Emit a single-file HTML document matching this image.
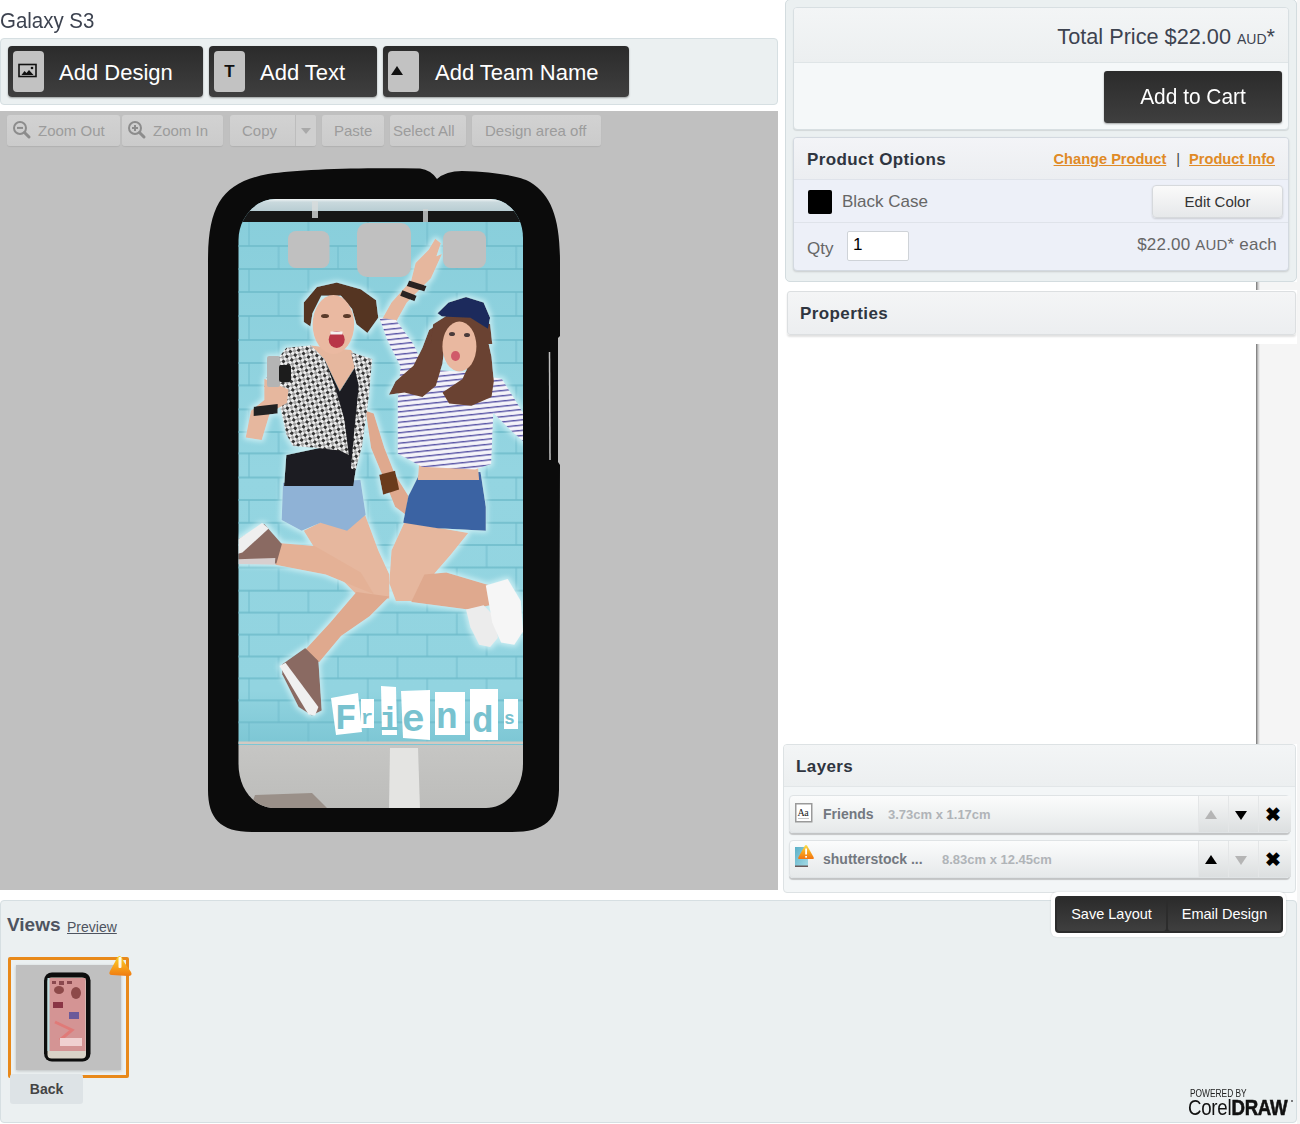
<!DOCTYPE html>
<html><head><meta charset="utf-8">
<style>
*{box-sizing:border-box;margin:0;padding:0}
html,body{width:1300px;height:1124px;overflow:hidden;background:#fff;font-family:"Liberation Sans",sans-serif;color:#333}
.a{position:absolute}
.title{left:0;top:6px;font-size:22px;color:#3d4350;line-height:30px;white-space:nowrap;transform:scaleX(.93);transform-origin:0 0}
.tbar{left:0;top:38px;width:778px;height:67px;background:#ebf0f1;border:1px solid #d6dfe2;border-radius:4px}
.dbtn{background:linear-gradient(#2b2b2b,#3f3f3f);border-radius:4px;box-shadow:0 1px 2px rgba(0,0,0,.35)}
.dbtn .ic{position:absolute;left:5px;top:5px;width:31px;height:41px;background:#c2c2c2;border-radius:4px}
.dbtn .tx{position:absolute;top:1px;line-height:51px;color:#fff;font-size:22px;white-space:nowrap}
.canvas{left:0;top:111px;width:778px;height:779px;background:#c0c0c0}
.gbtn{height:31px;top:115px;background:linear-gradient(#d2d2d2,#cbcbcb);border-radius:3px;box-shadow:0 1px 1px rgba(0,0,0,.08);color:#9c9c9c;font-size:15px;line-height:31px;white-space:nowrap}
.rp{left:785px;top:-1px;width:512px;height:283px;background:#ebf0f1;border:1px solid #d3dcdf;border-radius:5px}
.box{background:#f4f6f7;border:1px solid #d5dcdf;border-radius:4px;box-shadow:0 1px 2px rgba(0,0,0,.12)}
.lrow{left:789px;width:501px;height:38px;background:linear-gradient(#fbfcfc,#e6e9ea);border:1px solid #dfe3e5;border-radius:4px;box-shadow:0 2px 1px rgba(0,0,0,.2)}
.lname{top:0;line-height:36px;font-size:14px;font-weight:bold;color:#737880;white-space:nowrap}
.ldim{top:1px;line-height:36px;font-size:13px;font-weight:bold;color:#b0b4b8;white-space:nowrap}
.lb{top:0;width:30px;height:36px;background:linear-gradient(#f6f7f7,#dcdfe0);border-left:1px solid #e4e6e7}
.lb.x{width:33px;font-size:19px;text-align:center;line-height:38px;color:#000;font-weight:bold;text-indent:-5px}
.tri{position:absolute;left:6px;top:14px;width:0;height:0;border-left:6px solid transparent;border-right:6px solid transparent}
.tri.up{border-bottom:9px solid #000}
.tri.dn{border-top:9px solid #000;top:15px}
</style></head><body>
<div class="a title">Galaxy S3</div>
<div class="a tbar"></div>
<div class="a dbtn" style="left:8px;top:46px;width:195px;height:51px"><div class="ic"><svg class="a" style="left:5px;top:12px" width="20" height="16" viewBox="0 0 20 16"><rect x="1" y="1.5" width="17" height="12" fill="none" stroke="#111" stroke-width="1.6"/><path d="M3.5,12 L6.5,8 L8.5,10 L11,7 L15.5,12 Z" fill="#111"/><circle cx="14" cy="5" r="1.3" fill="#111"/></svg></div><div class="tx" style="left:51px">Add Design</div></div>
<div class="a dbtn" style="left:209px;top:46px;width:168px;height:51px"><div class="ic"><div class="a" style="left:0;top:0;width:31px;line-height:41px;text-align:center;font-weight:bold;font-size:17px;color:#111">T</div></div><div class="tx" style="left:51px">Add Text</div></div>
<div class="a dbtn" style="left:383px;top:46px;width:246px;height:51px"><div class="ic"><div class="a" style="left:3px;top:15px;width:0;height:0;border-left:6px solid transparent;border-right:6px solid transparent;border-bottom:9px solid #111"></div></div><div class="tx" style="left:52px">Add Team Name</div></div>

<div class="a canvas"></div>
<svg class="a" style="left:0;top:111px" width="778" height="779" viewBox="0 111 778 779">
<defs>
 <clipPath id="scr"><path d="M276,199 L490,199 C508,199 523,216 523,238 L523,764 C523,789 506,808 486,808 L275,808 C254,808 238.5,789 238.5,764 L238.5,240 C238.5,218 255,199 276,199 Z"/></clipPath>
 <pattern id="stripe" x="0" y="0" width="8" height="5.2" patternUnits="userSpaceOnUse" patternTransform="rotate(-6)">
  <rect width="8" height="5.4" fill="#f4f3f9"/><rect y="3.4" width="8" height="1.4" fill="#5a56a6"/>
 </pattern>
 <pattern id="vest" x="0" y="0" width="6" height="6" patternUnits="userSpaceOnUse" patternTransform="rotate(35)">
  <rect width="6" height="6" fill="#ececec"/><rect width="3" height="3" fill="#363636"/><rect x="3" y="3" width="3" height="3" fill="#a0a0a0"/>
 </pattern>
 <filter id="glow" x="-10%" y="-10%" width="120%" height="120%">
  <feMorphology in="SourceAlpha" operator="dilate" radius="1.5" result="d"/>
  <feGaussianBlur in="d" stdDeviation="2.5" result="b"/>
  <feFlood flood-color="#d8f4f8" flood-opacity=".75"/>
  <feComposite in2="b" operator="in" result="g"/>
  <feMerge><feMergeNode in="g"/><feMergeNode in="SourceGraphic"/></feMerge>
 </filter>
 <linearGradient id="wallg" x1="0" y1="0" x2="0" y2="1">
  <stop offset="0" stop-color="#88cedb"/><stop offset=".5" stop-color="#94d5e1"/><stop offset=".9" stop-color="#92d4e0"/><stop offset="1" stop-color="#7cc6d4"/>
 </linearGradient>
 <linearGradient id="floorg" x1="0" y1="0" x2="0" y2="1">
  <stop offset="0" stop-color="#c6c6c4"/><stop offset="1" stop-color="#bcbcba"/>
 </linearGradient>
 <linearGradient id="topg" x1="0" y1="0" x2="0" y2="1">
  <stop offset="0" stop-color="#f0f4f5"/><stop offset=".25" stop-color="#c9d9dd"/><stop offset="1" stop-color="#b7ccd2"/>
 </linearGradient>
</defs>
<path d="M208,262 C208,205 222,183 268,174 C300,169 360,167.5 420,168.5 Q431,170 437,179 Q446,171 462,171 C495,172 520,176 530,182 C552,195 560,220 560,262 L560,336 L558,338 L558,462 L560,465 L559,790 C558,820 545,832 512,832 L252,832 C220,832 208,818 208,790 Z" fill="#0b0b0b"/>
<path d="M549.5,352 L550,460" stroke="#e0e0e0" stroke-width="1.5" opacity=".85"/>
<g clip-path="url(#scr)">
<rect x="238" y="199" width="286" height="546" fill="url(#wallg)"/>
<rect x="238" y="245.0" width="286" height="2" fill="#6fbccb" opacity=".8"/>
<rect x="238" y="268.0" width="286" height="2" fill="#6fbccb" opacity=".8"/>
<rect x="238" y="291.0" width="286" height="2" fill="#6fbccb" opacity=".8"/>
<rect x="238" y="315.0" width="286" height="2" fill="#6fbccb" opacity=".8"/>
<rect x="238" y="339.0" width="286" height="2" fill="#6fbccb" opacity=".8"/>
<rect x="238" y="362.0" width="286" height="2" fill="#6fbccb" opacity=".8"/>
<rect x="238" y="384.4" width="286" height="2" fill="#6fbccb" opacity=".8"/>
<rect x="238" y="408.4" width="286" height="2" fill="#6fbccb" opacity=".8"/>
<rect x="238" y="431.0" width="286" height="2" fill="#6fbccb" opacity=".8"/>
<rect x="238" y="452.4" width="286" height="2" fill="#6fbccb" opacity=".8"/>
<rect x="238" y="476.5" width="286" height="2" fill="#6fbccb" opacity=".8"/>
<rect x="238" y="499.0" width="286" height="2" fill="#6fbccb" opacity=".8"/>
<rect x="238" y="521.8" width="286" height="2" fill="#6fbccb" opacity=".8"/>
<rect x="238" y="544.0" width="286" height="2" fill="#6fbccb" opacity=".8"/>
<rect x="238" y="566.5" width="286" height="2" fill="#6fbccb" opacity=".8"/>
<rect x="238" y="589.7" width="286" height="2" fill="#6fbccb" opacity=".8"/>
<rect x="238" y="611.6" width="286" height="2" fill="#6fbccb" opacity=".8"/>
<rect x="238" y="633.6" width="286" height="2" fill="#6fbccb" opacity=".8"/>
<rect x="238" y="655.5" width="286" height="2" fill="#6fbccb" opacity=".8"/>
<rect x="238" y="677.4" width="286" height="2" fill="#6fbccb" opacity=".8"/>
<rect x="238" y="699.4" width="286" height="2" fill="#6fbccb" opacity=".8"/>
<rect x="238" y="721.3" width="286" height="2" fill="#6fbccb" opacity=".8"/>
<rect x="248.0" y="222.0" width="2" height="24.0" fill="#6fbccb" opacity=".5"/>
<rect x="307.4" y="222.0" width="2" height="24.0" fill="#6fbccb" opacity=".5"/>
<rect x="366.8" y="222.0" width="2" height="24.0" fill="#6fbccb" opacity=".5"/>
<rect x="426.2" y="222.0" width="2" height="24.0" fill="#6fbccb" opacity=".5"/>
<rect x="485.6" y="222.0" width="2" height="24.0" fill="#6fbccb" opacity=".5"/>
<rect x="277.6" y="246.0" width="2" height="23.0" fill="#6fbccb" opacity=".5"/>
<rect x="337.0" y="246.0" width="2" height="23.0" fill="#6fbccb" opacity=".5"/>
<rect x="396.4" y="246.0" width="2" height="23.0" fill="#6fbccb" opacity=".5"/>
<rect x="455.8" y="246.0" width="2" height="23.0" fill="#6fbccb" opacity=".5"/>
<rect x="515.2" y="246.0" width="2" height="23.0" fill="#6fbccb" opacity=".5"/>
<rect x="248.0" y="269.0" width="2" height="23.0" fill="#6fbccb" opacity=".5"/>
<rect x="307.4" y="269.0" width="2" height="23.0" fill="#6fbccb" opacity=".5"/>
<rect x="366.8" y="269.0" width="2" height="23.0" fill="#6fbccb" opacity=".5"/>
<rect x="426.2" y="269.0" width="2" height="23.0" fill="#6fbccb" opacity=".5"/>
<rect x="485.6" y="269.0" width="2" height="23.0" fill="#6fbccb" opacity=".5"/>
<rect x="277.6" y="292.0" width="2" height="24.0" fill="#6fbccb" opacity=".5"/>
<rect x="337.0" y="292.0" width="2" height="24.0" fill="#6fbccb" opacity=".5"/>
<rect x="396.4" y="292.0" width="2" height="24.0" fill="#6fbccb" opacity=".5"/>
<rect x="455.8" y="292.0" width="2" height="24.0" fill="#6fbccb" opacity=".5"/>
<rect x="515.2" y="292.0" width="2" height="24.0" fill="#6fbccb" opacity=".5"/>
<rect x="248.0" y="316.0" width="2" height="24.0" fill="#6fbccb" opacity=".5"/>
<rect x="307.4" y="316.0" width="2" height="24.0" fill="#6fbccb" opacity=".5"/>
<rect x="366.8" y="316.0" width="2" height="24.0" fill="#6fbccb" opacity=".5"/>
<rect x="426.2" y="316.0" width="2" height="24.0" fill="#6fbccb" opacity=".5"/>
<rect x="485.6" y="316.0" width="2" height="24.0" fill="#6fbccb" opacity=".5"/>
<rect x="277.6" y="340.0" width="2" height="23.0" fill="#6fbccb" opacity=".5"/>
<rect x="337.0" y="340.0" width="2" height="23.0" fill="#6fbccb" opacity=".5"/>
<rect x="396.4" y="340.0" width="2" height="23.0" fill="#6fbccb" opacity=".5"/>
<rect x="455.8" y="340.0" width="2" height="23.0" fill="#6fbccb" opacity=".5"/>
<rect x="515.2" y="340.0" width="2" height="23.0" fill="#6fbccb" opacity=".5"/>
<rect x="248.0" y="363.0" width="2" height="22.4" fill="#6fbccb" opacity=".5"/>
<rect x="307.4" y="363.0" width="2" height="22.4" fill="#6fbccb" opacity=".5"/>
<rect x="366.8" y="363.0" width="2" height="22.4" fill="#6fbccb" opacity=".5"/>
<rect x="426.2" y="363.0" width="2" height="22.4" fill="#6fbccb" opacity=".5"/>
<rect x="485.6" y="363.0" width="2" height="22.4" fill="#6fbccb" opacity=".5"/>
<rect x="277.6" y="385.4" width="2" height="24.0" fill="#6fbccb" opacity=".5"/>
<rect x="337.0" y="385.4" width="2" height="24.0" fill="#6fbccb" opacity=".5"/>
<rect x="396.4" y="385.4" width="2" height="24.0" fill="#6fbccb" opacity=".5"/>
<rect x="455.8" y="385.4" width="2" height="24.0" fill="#6fbccb" opacity=".5"/>
<rect x="515.2" y="385.4" width="2" height="24.0" fill="#6fbccb" opacity=".5"/>
<rect x="248.0" y="409.4" width="2" height="22.6" fill="#6fbccb" opacity=".5"/>
<rect x="307.4" y="409.4" width="2" height="22.6" fill="#6fbccb" opacity=".5"/>
<rect x="366.8" y="409.4" width="2" height="22.6" fill="#6fbccb" opacity=".5"/>
<rect x="426.2" y="409.4" width="2" height="22.6" fill="#6fbccb" opacity=".5"/>
<rect x="485.6" y="409.4" width="2" height="22.6" fill="#6fbccb" opacity=".5"/>
<rect x="277.6" y="432.0" width="2" height="21.4" fill="#6fbccb" opacity=".5"/>
<rect x="337.0" y="432.0" width="2" height="21.4" fill="#6fbccb" opacity=".5"/>
<rect x="396.4" y="432.0" width="2" height="21.4" fill="#6fbccb" opacity=".5"/>
<rect x="455.8" y="432.0" width="2" height="21.4" fill="#6fbccb" opacity=".5"/>
<rect x="515.2" y="432.0" width="2" height="21.4" fill="#6fbccb" opacity=".5"/>
<rect x="248.0" y="453.4" width="2" height="24.1" fill="#6fbccb" opacity=".5"/>
<rect x="307.4" y="453.4" width="2" height="24.1" fill="#6fbccb" opacity=".5"/>
<rect x="366.8" y="453.4" width="2" height="24.1" fill="#6fbccb" opacity=".5"/>
<rect x="426.2" y="453.4" width="2" height="24.1" fill="#6fbccb" opacity=".5"/>
<rect x="485.6" y="453.4" width="2" height="24.1" fill="#6fbccb" opacity=".5"/>
<rect x="277.6" y="477.5" width="2" height="22.5" fill="#6fbccb" opacity=".5"/>
<rect x="337.0" y="477.5" width="2" height="22.5" fill="#6fbccb" opacity=".5"/>
<rect x="396.4" y="477.5" width="2" height="22.5" fill="#6fbccb" opacity=".5"/>
<rect x="455.8" y="477.5" width="2" height="22.5" fill="#6fbccb" opacity=".5"/>
<rect x="515.2" y="477.5" width="2" height="22.5" fill="#6fbccb" opacity=".5"/>
<rect x="248.0" y="500.0" width="2" height="22.8" fill="#6fbccb" opacity=".5"/>
<rect x="307.4" y="500.0" width="2" height="22.8" fill="#6fbccb" opacity=".5"/>
<rect x="366.8" y="500.0" width="2" height="22.8" fill="#6fbccb" opacity=".5"/>
<rect x="426.2" y="500.0" width="2" height="22.8" fill="#6fbccb" opacity=".5"/>
<rect x="485.6" y="500.0" width="2" height="22.8" fill="#6fbccb" opacity=".5"/>
<rect x="277.6" y="522.8" width="2" height="22.2" fill="#6fbccb" opacity=".5"/>
<rect x="337.0" y="522.8" width="2" height="22.2" fill="#6fbccb" opacity=".5"/>
<rect x="396.4" y="522.8" width="2" height="22.2" fill="#6fbccb" opacity=".5"/>
<rect x="455.8" y="522.8" width="2" height="22.2" fill="#6fbccb" opacity=".5"/>
<rect x="515.2" y="522.8" width="2" height="22.2" fill="#6fbccb" opacity=".5"/>
<rect x="248.0" y="545.0" width="2" height="22.5" fill="#6fbccb" opacity=".5"/>
<rect x="307.4" y="545.0" width="2" height="22.5" fill="#6fbccb" opacity=".5"/>
<rect x="366.8" y="545.0" width="2" height="22.5" fill="#6fbccb" opacity=".5"/>
<rect x="426.2" y="545.0" width="2" height="22.5" fill="#6fbccb" opacity=".5"/>
<rect x="485.6" y="545.0" width="2" height="22.5" fill="#6fbccb" opacity=".5"/>
<rect x="277.6" y="567.5" width="2" height="23.2" fill="#6fbccb" opacity=".5"/>
<rect x="337.0" y="567.5" width="2" height="23.2" fill="#6fbccb" opacity=".5"/>
<rect x="396.4" y="567.5" width="2" height="23.2" fill="#6fbccb" opacity=".5"/>
<rect x="455.8" y="567.5" width="2" height="23.2" fill="#6fbccb" opacity=".5"/>
<rect x="515.2" y="567.5" width="2" height="23.2" fill="#6fbccb" opacity=".5"/>
<rect x="248.0" y="590.7" width="2" height="21.9" fill="#6fbccb" opacity=".5"/>
<rect x="307.4" y="590.7" width="2" height="21.9" fill="#6fbccb" opacity=".5"/>
<rect x="366.8" y="590.7" width="2" height="21.9" fill="#6fbccb" opacity=".5"/>
<rect x="426.2" y="590.7" width="2" height="21.9" fill="#6fbccb" opacity=".5"/>
<rect x="485.6" y="590.7" width="2" height="21.9" fill="#6fbccb" opacity=".5"/>
<rect x="277.6" y="612.6" width="2" height="22.0" fill="#6fbccb" opacity=".5"/>
<rect x="337.0" y="612.6" width="2" height="22.0" fill="#6fbccb" opacity=".5"/>
<rect x="396.4" y="612.6" width="2" height="22.0" fill="#6fbccb" opacity=".5"/>
<rect x="455.8" y="612.6" width="2" height="22.0" fill="#6fbccb" opacity=".5"/>
<rect x="515.2" y="612.6" width="2" height="22.0" fill="#6fbccb" opacity=".5"/>
<rect x="248.0" y="634.6" width="2" height="21.9" fill="#6fbccb" opacity=".5"/>
<rect x="307.4" y="634.6" width="2" height="21.9" fill="#6fbccb" opacity=".5"/>
<rect x="366.8" y="634.6" width="2" height="21.9" fill="#6fbccb" opacity=".5"/>
<rect x="426.2" y="634.6" width="2" height="21.9" fill="#6fbccb" opacity=".5"/>
<rect x="485.6" y="634.6" width="2" height="21.9" fill="#6fbccb" opacity=".5"/>
<rect x="277.6" y="656.5" width="2" height="21.9" fill="#6fbccb" opacity=".5"/>
<rect x="337.0" y="656.5" width="2" height="21.9" fill="#6fbccb" opacity=".5"/>
<rect x="396.4" y="656.5" width="2" height="21.9" fill="#6fbccb" opacity=".5"/>
<rect x="455.8" y="656.5" width="2" height="21.9" fill="#6fbccb" opacity=".5"/>
<rect x="515.2" y="656.5" width="2" height="21.9" fill="#6fbccb" opacity=".5"/>
<rect x="248.0" y="678.4" width="2" height="22.0" fill="#6fbccb" opacity=".5"/>
<rect x="307.4" y="678.4" width="2" height="22.0" fill="#6fbccb" opacity=".5"/>
<rect x="366.8" y="678.4" width="2" height="22.0" fill="#6fbccb" opacity=".5"/>
<rect x="426.2" y="678.4" width="2" height="22.0" fill="#6fbccb" opacity=".5"/>
<rect x="485.6" y="678.4" width="2" height="22.0" fill="#6fbccb" opacity=".5"/>
<rect x="277.6" y="700.4" width="2" height="21.9" fill="#6fbccb" opacity=".5"/>
<rect x="337.0" y="700.4" width="2" height="21.9" fill="#6fbccb" opacity=".5"/>
<rect x="396.4" y="700.4" width="2" height="21.9" fill="#6fbccb" opacity=".5"/>
<rect x="455.8" y="700.4" width="2" height="21.9" fill="#6fbccb" opacity=".5"/>
<rect x="515.2" y="700.4" width="2" height="21.9" fill="#6fbccb" opacity=".5"/>
<rect x="248.0" y="722.3" width="2" height="21.7" fill="#6fbccb" opacity=".5"/>
<rect x="307.4" y="722.3" width="2" height="21.7" fill="#6fbccb" opacity=".5"/>
<rect x="366.8" y="722.3" width="2" height="21.7" fill="#6fbccb" opacity=".5"/>
<rect x="426.2" y="722.3" width="2" height="21.7" fill="#6fbccb" opacity=".5"/>
<rect x="485.6" y="722.3" width="2" height="21.7" fill="#6fbccb" opacity=".5"/>
<rect x="238" y="199" width="286" height="12.5" fill="url(#topg)"/>
<rect x="238" y="211" width="286" height="11" fill="#161616"/>
<rect x="312" y="201" width="6" height="17" fill="#d8dcdc" opacity=".8"/><rect x="423" y="209" width="5" height="13" fill="#cfd3d3" opacity=".8"/>
<rect x="238" y="741.5" width="286" height="2.5" fill="#d2c9c2"/>
<rect x="238" y="745" width="286" height="64" fill="url(#floorg)"/>
<polygon points="390,748 418,748 420,809 389,809" fill="#e4e4e2"/>
<polygon points="255,795 312,793 328,809 250,809" fill="#9a9089"/>
<g filter="url(#glow)">
<polygon points="303.8,530.7 343.2,511.0 365.2,515.3 378.3,550.4 389.3,574.5 389.3,598.7 373.9,596.5 356.4,594.3 336.7,574.5 314.7,548.2" fill="#e6b79e"/>
<polygon points="275.3,542.8 314.7,546.0 360.8,572.4 373.9,594.3 325.7,574.5 275.3,564.7" fill="#e4b196"/>
<polygon points="356.4,592.1 389.3,596.5 369.6,616.2 341.0,635.9 319.1,662.2 303.8,651.3 330.1,622.8" fill="#dfa98e"/>
<polygon points="238.0,539.5 264.3,524.1 281.9,543.9 276.4,563.6 238.0,563.6" fill="#8a6a62"/>
<polygon points="238.0,539.5 262.1,523.0 268.7,528.5 242.4,552.6 238.0,553.7" fill="#efefef"/>
<polygon points="238.0,559.2 275.3,558.1 274.8,564.7 238.0,564.0" fill="#d8cfcf"/>
<polygon points="282.2,664.3 305.2,647.9 318.4,661.0 321.7,710.4 311.8,715.4 298.6,707.1 282.2,674.2" fill="#8a6a62"/>
<polygon points="279.5,666.0 285.5,662.7 318.4,707.1 315.1,715.4 308.5,714.4" fill="#f0f0f0"/>
<polygon points="404.6,521.9 468.2,532.9 450.7,554.8 435.3,572.4 413.4,600.9 395.9,600.9 389.3,583.3 391.5,550.4" fill="#e6b79e"/>
<polygon points="424.4,574.5 446.3,572.4 490.1,585.5 490.1,605.2 468.2,609.6 411.2,602.0" fill="#dfa98e"/>
<polygon points="466.0,609.6 483.6,605.2 496.7,618.4 497.8,638.1 490.1,646.9 479.2,644.7 470.4,627.2" fill="#ececec"/>
<polygon points="485.8,585.5 507.7,578.9 520.8,600.9 523.0,631.6 514.3,644.7 501.1,642.5 492.3,622.8" fill="#f6f6f6"/>
<polygon points="365.7,410.8 373.7,413.4 384.4,448.1 395.1,474.8 408.4,496.1 405.8,514.8 395.1,506.8 384.4,480.1 371.1,448.1" fill="#dfa98e"/>
<polygon points="379.1,474.8 395.1,470.8 399.1,489.5 383.1,494.8" fill="#6b3b1e"/>
<polygon points="283.0,482.8 360.4,480.1 365.7,514.8 347.1,530.8 320.4,522.8 301.7,530.8 281.7,520.1" fill="#8fb2d6"/>
<polygon points="310.8,345.6 351.0,350.1 358.8,361.2 339.8,391.3 324.2,359.0" fill="#e6b79e"/>
<polygon points="324.2,359.0 339.8,391.3 358.8,361.2 361.0,437.1 353.2,486.1 284.1,486.1 286.3,454.9 328.7,446.0" fill="#1d1d20"/>
<polygon points="286.3,347.8 310.8,345.6 324.2,359.0 335.4,388.0 344.3,419.2 348.8,454.9 339.8,450.5 319.8,448.2 293.0,446.0 286.3,434.8 279.6,403.6 264.0,388.0 268.5,370.2" fill="url(#vest)"/>
<polygon points="351.0,352.3 372.2,359.0 368.8,396.9 362.1,446.0 355.5,470.5 351.0,468.3 354.3,430.4 358.8,385.8" fill="url(#vest)"/>
<polygon points="264.3,378.7 288.4,389.4 287.0,402.8 269.7,413.4 261.7,440.1 245.7,437.4 251.0,410.8 264.3,400.1" fill="#e6b79e"/>
<polygon points="253.7,406.8 277.7,404.1 277.7,413.4 253.7,416.1" fill="#222"/>
<rect x="267" y="356" width="13" height="31" rx="2" fill="#b4b4b4"/><rect x="279" y="365" width="12" height="17" rx="2" fill="#1e1e1e"/>
<polygon points="303.8,302.4 316.9,287.0 336.7,282.6 360.8,289.2 376.1,300.2 378.3,317.7 367.4,333.0 356.4,324.3 352.0,308.9 341.0,295.8 321.3,295.8 312.5,313.3 310.4,326.5 303.8,322.1" fill="#553524"/>
<ellipse cx="333.4" cy="324.5" rx="20.8" ry="29.5" fill="#eab9a1"/>
<ellipse cx="336.7" cy="339.6" rx="8" ry="8.5" fill="#b83446"/><rect x="330.5" y="331.5" width="12" height="3" fill="#f4f0f0"/>
<ellipse cx="325" cy="316" rx="4" ry="2" fill="#5a3a2a"/><ellipse cx="347" cy="316" rx="4" ry="2" fill="#5a3a2a"/>
<polygon points="419.1,474.8 480.5,472.1 485.8,506.8 485.8,530.8 437.8,528.2 403.1,522.8 408.4,496.1" fill="#3b63a3"/>
<polygon points="419.1,464.1 477.8,464.1 479.1,480.1 417.8,480.1" fill="#e6b79e"/>
<polygon points="380.5,322.1 391.5,302.4 411.2,280.4 415.6,262.9 428.7,249.7 435.3,238.8 440.8,243.2 436.4,256.3 441.9,254.1 430.9,278.2 422.2,287.0 406.8,302.4 395.9,322.1" fill="#e6b79e"/>
<polygon points="409.0,280.4 426.6,285.9 424.4,291.4 406.8,285.9" fill="#2a2320"/>
<polygon points="402.4,290.3 416.7,295.8 414.5,301.3 400.2,295.8" fill="#2a2320"/>
<polygon points="379.4,317.7 395.9,319.9 413.4,344.0 426.6,372.5 404.6,374.7 387.1,339.6" fill="url(#stripe)"/>
<polygon points="400.4,368.1 491.1,373.4 493.8,400.1 491.1,464.1 475.1,469.5 421.8,466.8 397.8,453.4 397.8,400.1" fill="url(#stripe)"/>
<polygon points="483.1,376.1 501.8,378.7 515.1,400.1 525.0,416.1 525.0,442.8 512.5,432.1 491.1,410.8" fill="url(#stripe)"/>
<polygon points="442.5,321.1 429.1,330.0 422.4,347.8 413.5,365.7 395.6,381.3 388.9,394.7 404.5,392.5 422.4,396.9 435.8,385.8 442.5,363.5 444.7,343.4" fill="#6a4230"/>
<polygon points="475.9,321.1 487.1,336.7 491.5,356.8 493.8,381.3 491.5,396.9 471.4,405.8 449.1,403.6 442.5,392.5 462.5,379.1 471.4,359.0 469.2,338.9" fill="#6a4230"/>
<polygon points="433.1,324.3 448.5,314.4 474.8,314.4 490.1,324.3 492.3,344.0 477.0,344.0 446.3,344.0 430.9,344.0" fill="#6a4230"/>
<polygon points="437.5,313.3 448.5,302.4 466.0,296.9 483.6,302.4 490.1,317.7 487.9,328.7 470.4,317.7 441.9,316.6" fill="#1f2c5c"/>
<ellipse cx="459.4" cy="346.5" rx="17" ry="25" fill="#e9b8a0"/>
<ellipse cx="455.5" cy="356" rx="4.5" ry="5" fill="#d05a6a"/>
<ellipse cx="452" cy="334" rx="3" ry="2" fill="#4a3a3a"/><ellipse cx="467" cy="335" rx="3" ry="2" fill="#4a3a3a"/>
</g>
<g fill="#fff"><polygon points="331,698 358,693 362,732 336,735"/><polygon points="361,699 374,699 374,728 361,728"/><polygon points="381,686 396,687 397,735 382,735"/><polygon points="401,691 430,690 430,740 403,738"/><polygon points="435,692 465,692 465,735 435,735"/><polygon points="470,689 498,689 498,740 470,740"/><polygon points="504,699 518,699 518,729 504,729"/></g>
<g fill="#78c2cf" font-family="Liberation Mono" font-weight="bold">
  <text x="335" y="729" font-size="36">F</text>
  <text x="361" y="724" font-size="20">r</text>
  <text x="379" y="730" font-size="34">i</text>
  <text x="402" y="731" font-size="38">e</text>
  <text x="436" y="728" font-size="36">n</text>
  <text x="472" y="732" font-size="36">d</text>
  <text x="504" y="724" font-size="18">s</text>
 </g>
</g>
<rect x="288" y="231" width="41.5" height="37" rx="8" fill="#c0c0c0"/>
<rect x="357" y="223" width="54" height="54" rx="10" fill="#c0c0c0"/>
<rect x="443" y="231" width="43" height="37" rx="8" fill="#c0c0c0"/>
</svg>
<div class="a gbtn" style="left:7px;width:113px"><svg class="a" style="left:5px;top:4px" width="20" height="22" viewBox="0 0 20 22"><circle cx="8" cy="9" r="6" fill="none" stroke="#8c8c8c" stroke-width="2"/><path d="M5,8.9 H11" stroke="#8c8c8c" stroke-width="2"/><path d="M12.5,13.5 L17,18" stroke="#8c8c8c" stroke-width="3" stroke-linecap="round"/></svg><span style="position:absolute;left:31px">Zoom Out</span></div>
<div class="a gbtn" style="left:122px;width:101px"><svg class="a" style="left:5px;top:4px" width="20" height="22" viewBox="0 0 20 22"><circle cx="8" cy="9" r="6" fill="none" stroke="#8c8c8c" stroke-width="2"/><path d="M5,8.9 H11 M8,6 V12" stroke="#8c8c8c" stroke-width="2"/><path d="M12.5,13.5 L17,18" stroke="#8c8c8c" stroke-width="3" stroke-linecap="round"/></svg><span style="position:absolute;left:31px">Zoom In</span></div>
<div class="a gbtn" style="left:230px;width:86px"><span style="position:absolute;left:12px">Copy</span><div class="a" style="left:65px;top:0;width:1px;height:31px;background:#bdbdbd"></div><div class="a" style="left:66px;top:0;width:20px;height:31px;background:#cfcfcf;border-radius:0 3px 3px 0"></div><div class="a" style="left:71px;top:13px;width:0;height:0;border-left:5px solid transparent;border-right:5px solid transparent;border-top:6px solid #a9a9a9"></div></div>
<div class="a gbtn" style="left:322px;width:62px"><span style="position:absolute;left:12px">Paste</span></div>
<div class="a gbtn" style="left:390px;width:76px"><span style="position:absolute;left:3px">Select All</span></div>
<div class="a gbtn" style="left:472px;width:129px"><span style="position:absolute;left:13px">Design area off</span></div>

<div class="a rp"></div>
<div class="a" style="left:793px;top:7px;width:496px;height:123px;border:1px solid #d8dfe2;border-radius:4px;background:#f5f8f9;box-shadow:0 1px 1px rgba(0,0,0,.10);overflow:hidden">
 <div class="a" style="left:0;top:0;width:494px;height:55px;background:linear-gradient(#f3f5f6,#eceff0);border-bottom:1px solid #dfe5e7"></div>
 <div class="a" style="right:13px;top:14px;font-size:21.7px;color:#3d4350;line-height:30px;white-space:nowrap">Total Price $22.00 <span style="font-size:14px">AUD</span>*</div>
 <div class="a dbtn" style="left:310px;top:63px;width:178px;height:52px;border-radius:3px"><div class="tx" style="left:0;width:178px;text-align:center;line-height:50px;font-size:22px;transform:scaleX(.95)">Add to Cart</div></div>
</div>
<div class="a" style="left:793px;top:137px;width:496px;height:134px;border:1px solid #d3d9e0;border-radius:4px;background:#edf0f8;box-shadow:0 1px 2px rgba(0,0,0,.15);overflow:hidden">
 <div class="a" style="left:0;top:0;width:494px;height:42px;background:linear-gradient(#f3f4f7,#eceef1);border-bottom:1px solid #dfe3ea"></div>
 <div class="a" style="left:13px;top:12px;font-size:17px;font-weight:bold;color:#2f3540;line-height:20px;white-space:nowrap;letter-spacing:.4px">Product Options</div>
 <div class="a" style="right:13px;top:12px;font-size:14.6px;font-weight:bold;color:#e08a26;line-height:18px;white-space:nowrap"><u>Change Product</u><span style="color:#444;font-weight:normal;margin:0 9px 0 10px">|</span><u>Product Info</u></div>
 <div class="a" style="left:0;top:84px;width:494px;height:1px;background:#dfe3ea"></div>
 <div class="a" style="left:14px;top:52px;width:24px;height:24px;background:#000;border-radius:2px"></div>
 <div class="a" style="left:48px;top:54px;font-size:17px;color:#666;line-height:20px;white-space:nowrap">Black Case</div>
 <div class="a" style="left:358px;top:47px;width:131px;height:33px;background:linear-gradient(#fafafa,#e6e8ea);border:1px solid #d6d9dc;border-radius:4px;box-shadow:0 1px 2px rgba(0,0,0,.15);font-size:15px;color:#333;text-align:center;line-height:31px">Edit Color</div>
 <div class="a" style="left:13px;top:101px;font-size:17px;color:#666;line-height:20px">Qty</div>
 <div class="a" style="left:53px;top:93px;width:62px;height:30px;background:#fff;border:1px solid #cfd3d8;border-radius:2px;font-size:17px;color:#000;line-height:26px;padding-left:5px">1</div>
 <div class="a" style="right:11px;top:97px;font-size:17px;color:#666;line-height:20px;white-space:nowrap;letter-spacing:.2px">$22.00 <span style="font-size:15px">AUD</span>* each</div>
</div>
<div class="a" style="left:1256px;top:282px;width:44px;height:8px;background:#f5f5f5"></div>
<div class="a" style="left:1256px;top:282px;width:4px;height:8px;background:linear-gradient(90deg,#707070,#c8c8c8,#f5f5f5)"></div>
<div class="a" style="left:1256px;top:344px;width:44px;height:400px;background:#f5f5f5"></div>
<div class="a" style="left:1256px;top:344px;width:4px;height:400px;background:linear-gradient(90deg,#707070,#c8c8c8,#f5f5f5)"></div>
<div class="a" style="left:1297px;top:0;width:3px;height:344px;background:#f5f5f5"></div>
<div class="a" style="left:1297px;top:744px;width:3px;height:380px;background:#f5f5f5"></div>
<div class="a" style="left:787px;top:291px;width:509px;height:44px;border:1px solid #dcdfe1;border-radius:3px;background:linear-gradient(#f4f5f6,#eceef0);box-shadow:0 2px 2px rgba(0,0,0,.12)"><div class="a" style="left:12px;top:12px;font-size:17px;font-weight:bold;color:#2f3540;line-height:20px;letter-spacing:.4px">Properties</div></div>

<div class="a" style="left:783px;top:744px;width:513px;height:149px;border:1px solid #dde2e4;border-radius:4px;background:#f3f6f7;overflow:hidden">
 <div class="a" style="left:0;top:0;width:511px;height:42px;background:linear-gradient(#f3f5f6,#eceff0);border-bottom:1px solid #e2e6e8"></div>
 <div class="a" style="left:12px;top:12px;font-size:17px;font-weight:bold;color:#2f3540;line-height:20px;letter-spacing:.4px">Layers</div>
</div>
<div class="a lrow" style="top:795px">
 <svg class="a" style="left:5px;top:7px" width="18" height="20" viewBox="0 0 18 20"><rect x="0.75" y="0.75" width="16" height="18" fill="#fff" stroke="#9a9a9a" stroke-width="1.5"/><text x="2.5" y="13" font-family="Liberation Serif" font-size="10" fill="#222" letter-spacing="-.5">Aa</text><path d="M3,15.5 H14" stroke="#bbb" stroke-width=".8"/></svg>
 <div class="a lname" style="left:33px">Friends</div><div class="a ldim" style="left:98px">3.73cm x 1.17cm</div>
 <div class="a lb" style="left:408px"><span class="tri up" style="border-bottom-color:#b5b5b5"></span></div>
 <div class="a lb" style="left:438px"><span class="tri dn"></span></div>
 <div class="a lb x" style="left:468px">&#10006;</div>
</div>
<div class="a lrow" style="top:840px">
 <svg class="a" style="left:4px;top:3px" width="22" height="24" viewBox="0 0 22 24"><defs><linearGradient id="wg2" x1="0" y1="0" x2="0" y2="1"><stop offset="0" stop-color="#fbe04a"/><stop offset=".5" stop-color="#f8a51e"/><stop offset="1" stop-color="#f27410"/></linearGradient><linearGradient id="ig2" x1="0" y1="0" x2="1" y2="1"><stop offset="0" stop-color="#5ab0c8"/><stop offset="1" stop-color="#a6dbe6"/></linearGradient></defs><rect x="1" y="3" width="13" height="20" fill="url(#ig2)"/><rect x="1" y="21.5" width="13" height="1.5" fill="#6a5a5a"/><path d="M11,1.5 Q12,0.5 13,1.5 L19.5,13 Q20.5,15 18.5,15 L5.5,15 Q3.5,15 4.5,13 Z" fill="url(#wg2)"/><rect x="11.2" y="4.5" width="1.8" height="6" fill="#fff"/><rect x="11.2" y="12" width="1.8" height="1.6" fill="#fff"/></svg>
 <div class="a lname" style="left:33px">shutterstock ...</div><div class="a ldim" style="left:152px">8.83cm x 12.45cm</div>
 <div class="a lb" style="left:408px"><span class="tri up"></span></div>
 <div class="a lb" style="left:438px"><span class="tri dn" style="border-top-color:#b5b5b5"></span></div>
 <div class="a lb x" style="left:468px">&#10006;</div>
</div>

<div class="a" style="left:0;top:900px;width:1297px;height:223px;border:1px solid #d6dfe2;border-radius:4px;background:#ebf0f1">
 <div class="a" style="left:6px;top:13px;font-size:19px;font-weight:bold;color:#4e5460;line-height:22px">Views</div>
 <div class="a" style="left:66px;top:17px;font-size:14px;color:#4e5460;line-height:18px;text-decoration:underline">Preview</div>
 <div class="a" style="left:7px;top:56px;width:121px;height:121px;border:3px solid #e8891a;border-radius:2px"></div>
 <div class="a" style="left:15px;top:64px;width:105px;height:105px;background:#c0c0c0;box-shadow:0 1px 3px rgba(0,0,0,.2)"></div>
 <div class="a" style="left:9px;top:173px;width:73px;height:30px;background:#dde3e6;border-radius:3px;font-size:14px;font-weight:bold;color:#444;text-align:center;line-height:30px">Back</div>
</div>

<svg class="a" style="left:0;top:940px" width="140" height="130" viewBox="0 940 140 130">
 <defs><linearGradient id="wg" x1="0" y1="0" x2="0" y2="1"><stop offset="0" stop-color="#f9d423"/><stop offset=".55" stop-color="#f7a21b"/><stop offset="1" stop-color="#f07b12"/></linearGradient><filter id="tb"><feGaussianBlur stdDeviation=".7"/></filter></defs><g filter="url(#tb)">
 <rect x="44" y="972.5" width="46.5" height="89" rx="8" fill="#0a0a0a"/>
 <rect x="47.5" y="977.5" width="38.5" height="81" rx="4" fill="#d9d3c8"/>
 <rect x="48" y="978" width="37.5" height="73" fill="#d49494"/>
 <rect x="47.5" y="978" width="2" height="73" fill="#b9dde0"/>
 <rect x="52" y="981" width="4" height="3" fill="#8a4a50"/><rect x="59" y="981" width="5" height="4" fill="#8a4a50"/><rect x="67" y="981" width="5" height="3" fill="#8a4a50"/>
 <ellipse cx="59" cy="990" rx="5" ry="4" fill="#8d4a4a"/>
 <ellipse cx="76" cy="993" rx="5" ry="6" fill="#8d4a4a"/>
 <rect x="53" y="1002" width="10" height="6" fill="#8a3545"/>
 <rect x="69" y="1012" width="10" height="7" fill="#6a5a9a"/>
 <path d="M55,1022 L72,1030 L60,1040" stroke="#e07a78" stroke-width="3" fill="none"/>
 <rect x="60" y="1038" width="22" height="8" fill="#f0d0d0"/>
 </g>
 <path d="M115,962 Q119.5,950 124,962 L131,972 Q133,976 128,976 L112,975 Q108,975 110,971 Z" fill="url(#wg)"/>
 <rect x="118.5" y="957" width="3" height="11" rx="1" fill="#fff" opacity=".9"/>
</svg>
<div class="a" style="left:1051px;top:892px;width:235px;height:45px;background:#fff;border-radius:6px;box-shadow:0 0 2px rgba(0,0,0,.15)"></div>
<div class="a" style="left:1055px;top:896px;width:228px;height:37px;background:#2c2c2c;border-radius:4px"></div>
<div class="a dbtn" style="left:1057px;top:898px;width:109px;height:33px;border-radius:3px;box-shadow:none"><div class="tx" style="left:0;width:109px;text-align:center;line-height:30px;font-size:14.5px">Save Layout</div></div>
<div class="a dbtn" style="left:1168px;top:898px;width:113px;height:33px;border-radius:3px;box-shadow:none"><div class="tx" style="left:0;width:113px;text-align:center;line-height:30px;font-size:14.5px">Email Design</div></div>

<div class="a" style="left:1190px;top:1087px;font-size:11px;color:#222;line-height:12px;white-space:nowrap;transform:scaleX(.76);transform-origin:0 0">POWERED BY</div>
<div class="a" style="left:1188px;top:1096px;font-size:22.5px;color:#111;line-height:24px;white-space:nowrap;transform:scaleX(.83);transform-origin:0 0;letter-spacing:-.3px">Corel<b style="-webkit-text-stroke:.6px #111">DRAW</b></div>
<div class="a" style="left:1291px;top:1100px;width:2px;height:2px;background:#555;border-radius:1px"></div>
</body></html>
